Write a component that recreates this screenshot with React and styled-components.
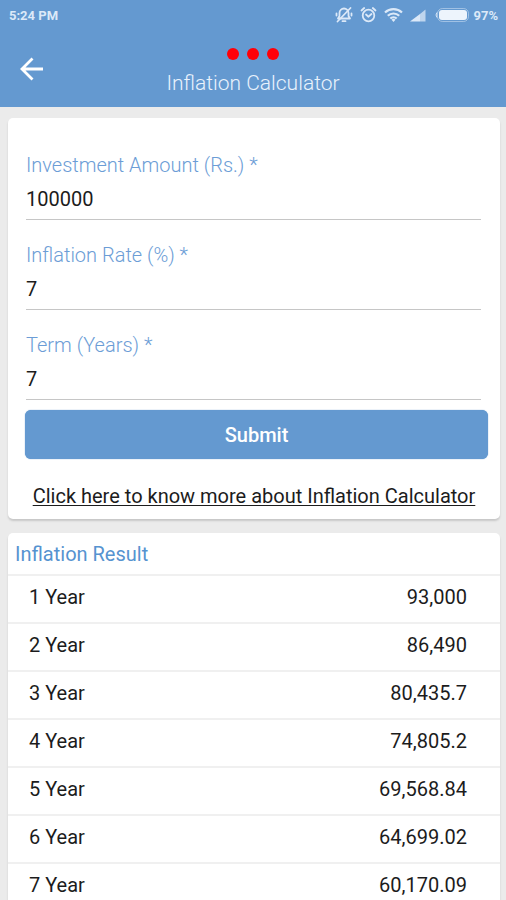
import React, { useId, useState } from "react";
import styled, { createGlobalStyle } from "styled-components";

const GlobalStyle = createGlobalStyle`
  *, *::before, *::after { box-sizing: border-box; }
  body { margin: 0; background: #ebebeb; }
  body, button, input { font-family: Roboto, "Noto Sans", sans-serif; }
`;

const Screen = styled.div`
  display: flex;
  flex-direction: column;
  height: 100vh;
  color: #1c1c1c;
  background: #ebebeb;
`;

const Header = styled.header`
  flex: none;
  color: #e9f2fc;
  background: #6499d0;
`;

const StatusBar = styled.div`
  display: flex;
  align-items: center;
  justify-content: space-between;
  height: 30px;
  padding: 0 8px 0 9px;
  font-size: 13px;
  font-weight: 700;
  color: #dce9f8;
`;

const StatusIcons = styled.div`
  display: flex;
  align-items: center;
  gap: 7px;
  svg { display: block; }
`;

const BatteryLevel = styled.span`
  display: flex;
  align-items: center;
  gap: 4px;
  margin-left: 2px;
`;

const TitleBar = styled.div`
  display: grid;
  grid-template-columns: 64px 1fr 64px;
  height: 77px;
`;

const BackButton = styled.button`
  display: flex;
  align-items: center;
  justify-content: center;
  height: 77px;
  padding: 0;
  border: 0;
  color: #fff;
  background: none;
  cursor: pointer;
`;

const TitleGroup = styled.div`
  display: flex;
  flex-direction: column;
  align-items: center;
  gap: 10px;
  padding-top: 18px;
`;

const Dots = styled.div`
  display: flex;
  gap: 8px;
`;

const Dot = styled.span`
  width: 12px;
  height: 12px;
  border-radius: 50%;
  background: #ff0008;
`;

const Title = styled.h1`
  margin: 0;
  font-size: 21px;
  line-height: 26px;
  font-weight: 300;
`;

const Content = styled.main`
  flex: 1;
  min-height: 0;
  overflow-y: auto;
  scrollbar-width: none;
  display: flex;
  flex-direction: column;
  gap: 14px;
  padding: 11px 6px 12px 8px;
`;

const Card = styled.section`
  flex: none;
  border-radius: 5px;
  background: #fff;
  box-shadow: 0 2px 2px #c8c8c8;
`;

const Form = styled.form`
  display: flex;
  flex-direction: column;
  padding: 35px 0 10px;
`;

const Fields = styled.div`
  display: flex;
  flex-direction: column;
  gap: 23px;
  margin: 0 19px 0 18px;
`;

const FieldBox = styled.div`
  display: flex;
  flex-direction: column;
`;

const Label = styled.label`
  font-size: 20px;
  line-height: 25px;
  font-weight: 300;
  color: #6c9dd6;
`;

const TextInput = styled.input`
  width: 100%;
  height: 42px;
  padding: 0;
  border: 0;
  border-bottom: 1px solid #c6c6c6;
  border-radius: 0;
  outline: 0;
  font-size: 20px;
  color: #1c1c1c;
  background: transparent;
`;

const SubmitButton = styled.button`
  height: 49px;
  margin: 10px 12px 0 17px;
  border: 0;
  border-radius: 6px;
  font-size: 20px;
  font-weight: 500;
  color: #fff;
  background: #6499d0;
  box-shadow: 0 0 1px #3c7fc0;
  cursor: pointer;
`;

const InfoLink = styled.a`
  align-self: center;
  margin-top: 24px;
  font-size: 20px;
  line-height: 26px;
  white-space: nowrap;
  color: #1c1c1c;
  text-decoration: underline;
  text-decoration-thickness: 1px;
  text-underline-offset: 2px;
`;

const ResultTable = styled.table`
  width: 100%;
  border-collapse: separate;
  border-spacing: 0;
  font-size: 20px;
`;

const ResultTitle = styled.caption`
  padding: 2px 7px 0;
  line-height: 39px;
  text-align: left;
  color: #5693d0;
`;

const YearCell = styled.th`
  height: 48px;
  padding: 0 0 4px 21px;
  border-top: 2px solid #f0f0f0;
  font-weight: 400;
  text-align: left;
`;

const AmountCell = styled.td`
  padding: 0 33px 4px 0;
  border-top: 2px solid #f0f0f0;
  text-align: right;
`;

const results = [
  ["1 Year", "93,000"],
  ["2 Year", "86,490"],
  ["3 Year", "80,435.7"],
  ["4 Year", "74,805.2"],
  ["5 Year", "69,568.84"],
  ["6 Year", "64,699.02"],
  ["7 Year", "60,170.09"],
];

function MutedBellIcon() {
  return (
    <svg width="18" height="18" viewBox="0 0 18 18" fill="none" stroke="currentColor" strokeWidth="1.8" strokeLinecap="round" strokeLinejoin="round" aria-hidden="true">
      <path d="M3 12.500 4.500 10V7a4.500 4.500 0 0 1 9 0v3l1.500 2.500H3Z" />
      <path d="M7.500 15.200h3M15.500 2 2.500 15.500M1.500 7.500v2M16.500 7.500v2" />
    </svg>
  );
}

function AlarmIcon() {
  return (
    <svg width="17" height="18" viewBox="0 0 17 18" fill="none" stroke="currentColor" strokeWidth="1.8" strokeLinecap="round" strokeLinejoin="round" aria-hidden="true">
      <circle cx="8.500" cy="9.500" r="5.800" />
      <path d="m6 8.500 2.500 2.200L11.500 8M1.500 4.500 4.200 2M15.500 4.500 12.800 2" />
    </svg>
  );
}

function WifiIcon() {
  return (
    <svg width="19" height="16" viewBox="0 0 19 16" fill="none" stroke="currentColor" strokeWidth="2.200" aria-hidden="true">
      <path d="M1 5.500a12.500 12.500 0 0 1 17 0M3.800 8.800a8.200 8.200 0 0 1 11.400 0M6.300 11.600a4.500 4.500 0 0 1 6.400 0" />
      <path d="m7.500 12.800 2 2.200 2-2.200a2.800 2.800 0 0 0-4 0Z" fill="currentColor" stroke="none" />
    </svg>
  );
}

function SignalIcon() {
  return (
    <svg width="16" height="14" viewBox="0 0 16 14" fill="currentColor" aria-hidden="true">
      <path d="M0 13.500 10 6v7.500Z" />
      <path d="M10 6 15.500 1.500v12H10Z" opacity=".75" />
    </svg>
  );
}

function BatteryIcon() {
  return (
    <svg width="34" height="14" viewBox="0 0 34 14" aria-hidden="true">
      <path d="M2 4.500Q0 7 2 9.500" fill="none" stroke="currentColor" />
      <rect x="2.500" y=".5" width="31" height="13" rx="5" fill="none" stroke="currentColor" opacity=".5" />
      <rect x="4" y="2" width="28" height="10" rx="3" fill="#edf4fc" />
    </svg>
  );
}

function BackIcon() {
  return (
    <svg width="24" height="24" viewBox="0 0 24 24" fill="none" stroke="currentColor" strokeWidth="2.800" aria-hidden="true">
      <path d="M23 12H3M12.500 1.500 2 12l10.500 10.500" />
    </svg>
  );
}

function Field({ label, initial }) {
  const id = useId();
  const [value, setValue] = useState(initial);
  return (
    <FieldBox>
      <Label htmlFor={id}>{label}</Label>
      <TextInput id={id} inputMode="decimal" value={value} onChange={(e) => setValue(e.target.value)} />
    </FieldBox>
  );
}

export default function App() {
  return (
    <Screen>
      <GlobalStyle />
      <Header>
        <StatusBar>
          <span>5:24 PM</span>
          <StatusIcons>
            <MutedBellIcon />
            <AlarmIcon />
            <WifiIcon />
            <SignalIcon />
            <BatteryLevel>
              <BatteryIcon />
              97%
            </BatteryLevel>
          </StatusIcons>
        </StatusBar>
        <TitleBar>
          <BackButton type="button" aria-label="Back">
            <BackIcon />
          </BackButton>
          <TitleGroup>
            <Dots>
              <Dot />
              <Dot />
              <Dot />
            </Dots>
            <Title>Inflation Calculator</Title>
          </TitleGroup>
        </TitleBar>
      </Header>
      <Content>
        <Card>
          <Form onSubmit={(e) => e.preventDefault()}>
            <Fields>
              <Field label="Investment Amount (Rs.) *" initial="100000" />
              <Field label="Inflation Rate (%) *" initial="7" />
              <Field label="Term (Years) *" initial="7" />
            </Fields>
            <SubmitButton type="submit">Submit</SubmitButton>
            <InfoLink href="#about">Click here to know more about Inflation Calculator</InfoLink>
          </Form>
        </Card>
        <Card>
          <ResultTable>
            <ResultTitle>Inflation Result</ResultTitle>
            <tbody>
              {results.map(([year, amount]) => (
                <tr key={year}>
                  <YearCell scope="row">{year}</YearCell>
                  <AmountCell>{amount}</AmountCell>
                </tr>
              ))}
            </tbody>
          </ResultTable>
        </Card>
      </Content>
    </Screen>
  );
}
